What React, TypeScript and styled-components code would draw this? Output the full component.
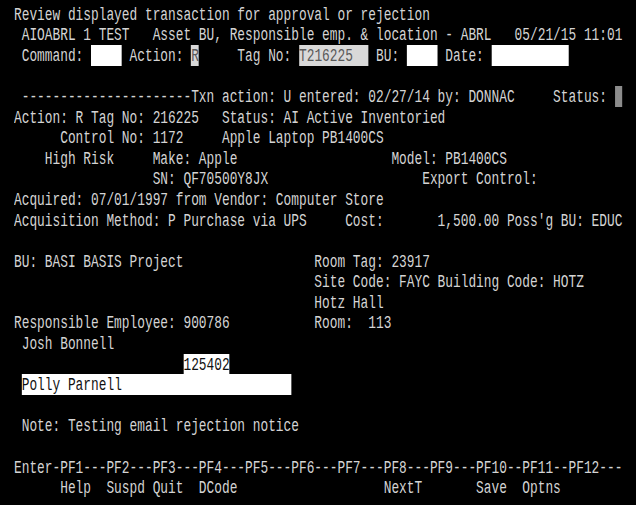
import React from "react";
import styled, { createGlobalStyle, css } from "styled-components";

const Global = createGlobalStyle`
  html, body {
    margin: 0;
    padding: 0;
    background: #000;
    overflow: hidden;
  }
`;

const Frame = styled.div`
  background: #000;
  width: 636px;
  height: 505px;
  box-sizing: border-box;
  padding: 3.8px 0 0 13.5px;
  overflow: hidden;
`;

const Screen = styled.div`
  font-family: "Liberation Mono", "DejaVu Sans Mono", monospace;
  font-size: 18px;
  color: #d4d4d4;
  width: 80ch;
  transform: scaleX(0.713);
  transform-origin: 0 0;
`;

const Row = styled.div`
  height: 20.58px;
  line-height: 23.8px;
  white-space: pre;
  overflow: visible;
`;

type FieldKind = "input" | "protected" | "cursor";

const kinds: Record<FieldKind, ReturnType<typeof css>> = {
  input: css`
    background: #ffffff;
    color: #111111;
  `,
  protected: css`
    background: #d9d9d9;
    color: #5a5a5a;
  `,
  cursor: css`
    background: #8c8c8c;
    color: #8c8c8c;
  `,
};

const Field = styled.span<{ $w: number; $kind: FieldKind }>`
  display: inline-block;
  width: ${(p) => p.$w}ch;
  height: 20.58px;
  vertical-align: top;
  ${(p) => kinds[p.$kind]}
`;

const place = (...parts: [number, string][]) => {
  let s = "";
  for (const [col, text] of parts) {
    s = s.padEnd(col, " ") + text;
  }
  return s;
};

const Line = ({ children }: { children?: React.ReactNode }) => <Row>{children}</Row>;

export default function App() {
  return (
    <>
      <Global />
      <Frame>
        <Screen>
          <Line>Review displayed transaction for approval or rejection</Line>
          <Line>{" AIOABRL 1 TEST   Asset BU, Responsible emp. & location - ABRL   05/21/15 11:01"}</Line>
          <Line>
            {" Command: "}
            <Field $w={4} $kind="input" />
            {" Action: "}
            <Field $w={1} $kind="protected">R</Field>
            {"     Tag No: "}
            <Field $w={9} $kind="protected">T216225</Field>
            {" BU: "}
            <Field $w={4} $kind="input" />
            {" Date: "}
            <Field $w={10} $kind="input" />
          </Line>
          <Line />
          <Line>
            {" ----------------------Txn action: U entered: 02/27/14 by: DONNAC     Status: "}
            <Field $w={1} $kind="cursor" />
          </Line>
          <Line>{"Action: R Tag No: 216225   Status: AI Active Inventoried"}</Line>
          <Line>{"      Control No: 1172     Apple Laptop PB1400CS"}</Line>
          <Line>{place([4, "High Risk"], [18, "Make: Apple"], [49, "Model: PB1400CS"])}</Line>
          <Line>{place([18, "SN: QF70500Y8JX"], [53, "Export Control:"])}</Line>
          <Line>{"Acquired: 07/01/1997 from Vendor: Computer Store"}</Line>
          <Line>
            {place(
              [0, "Acquisition Method: P Purchase via UPS"],
              [43, "Cost:"],
              [55, "1,500.00 Poss'g BU: EDUC"]
            )}
          </Line>
          <Line />
          <Line>{place([0, "BU: BASI BASIS Project"], [39, "Room Tag: 23917"])}</Line>
          <Line>{place([39, "Site Code: FAYC Building Code: HOTZ"])}</Line>
          <Line>{place([39, "Hotz Hall"])}</Line>
          <Line>{place([0, "Responsible Employee: 900786"], [39, "Room:  113"])}</Line>
          <Line>{" Josh Bonnell"}</Line>
          <Line>
            {place([22, ""])}
            <Field $w={6} $kind="input">125402</Field>
          </Line>
          <Line>
            {" "}
            <Field $w={35} $kind="input">Polly Parnell</Field>
          </Line>
          <Line />
          <Line>{" Note: Testing email rejection notice"}</Line>
          <Line />
          <Line>{"Enter-PF1---PF2---PF3---PF4---PF5---PF6---PF7---PF8---PF9---PF10--PF11--PF12---"}</Line>
          <Line>
            {place(
              [6, "Help"],
              [12, "Suspd"],
              [18, "Quit"],
              [24, "DCode"],
              [48, "NextT"],
              [60, "Save"],
              [66, "Optns"]
            )}
          </Line>
        </Screen>
      </Frame>
    </>
  );
}
